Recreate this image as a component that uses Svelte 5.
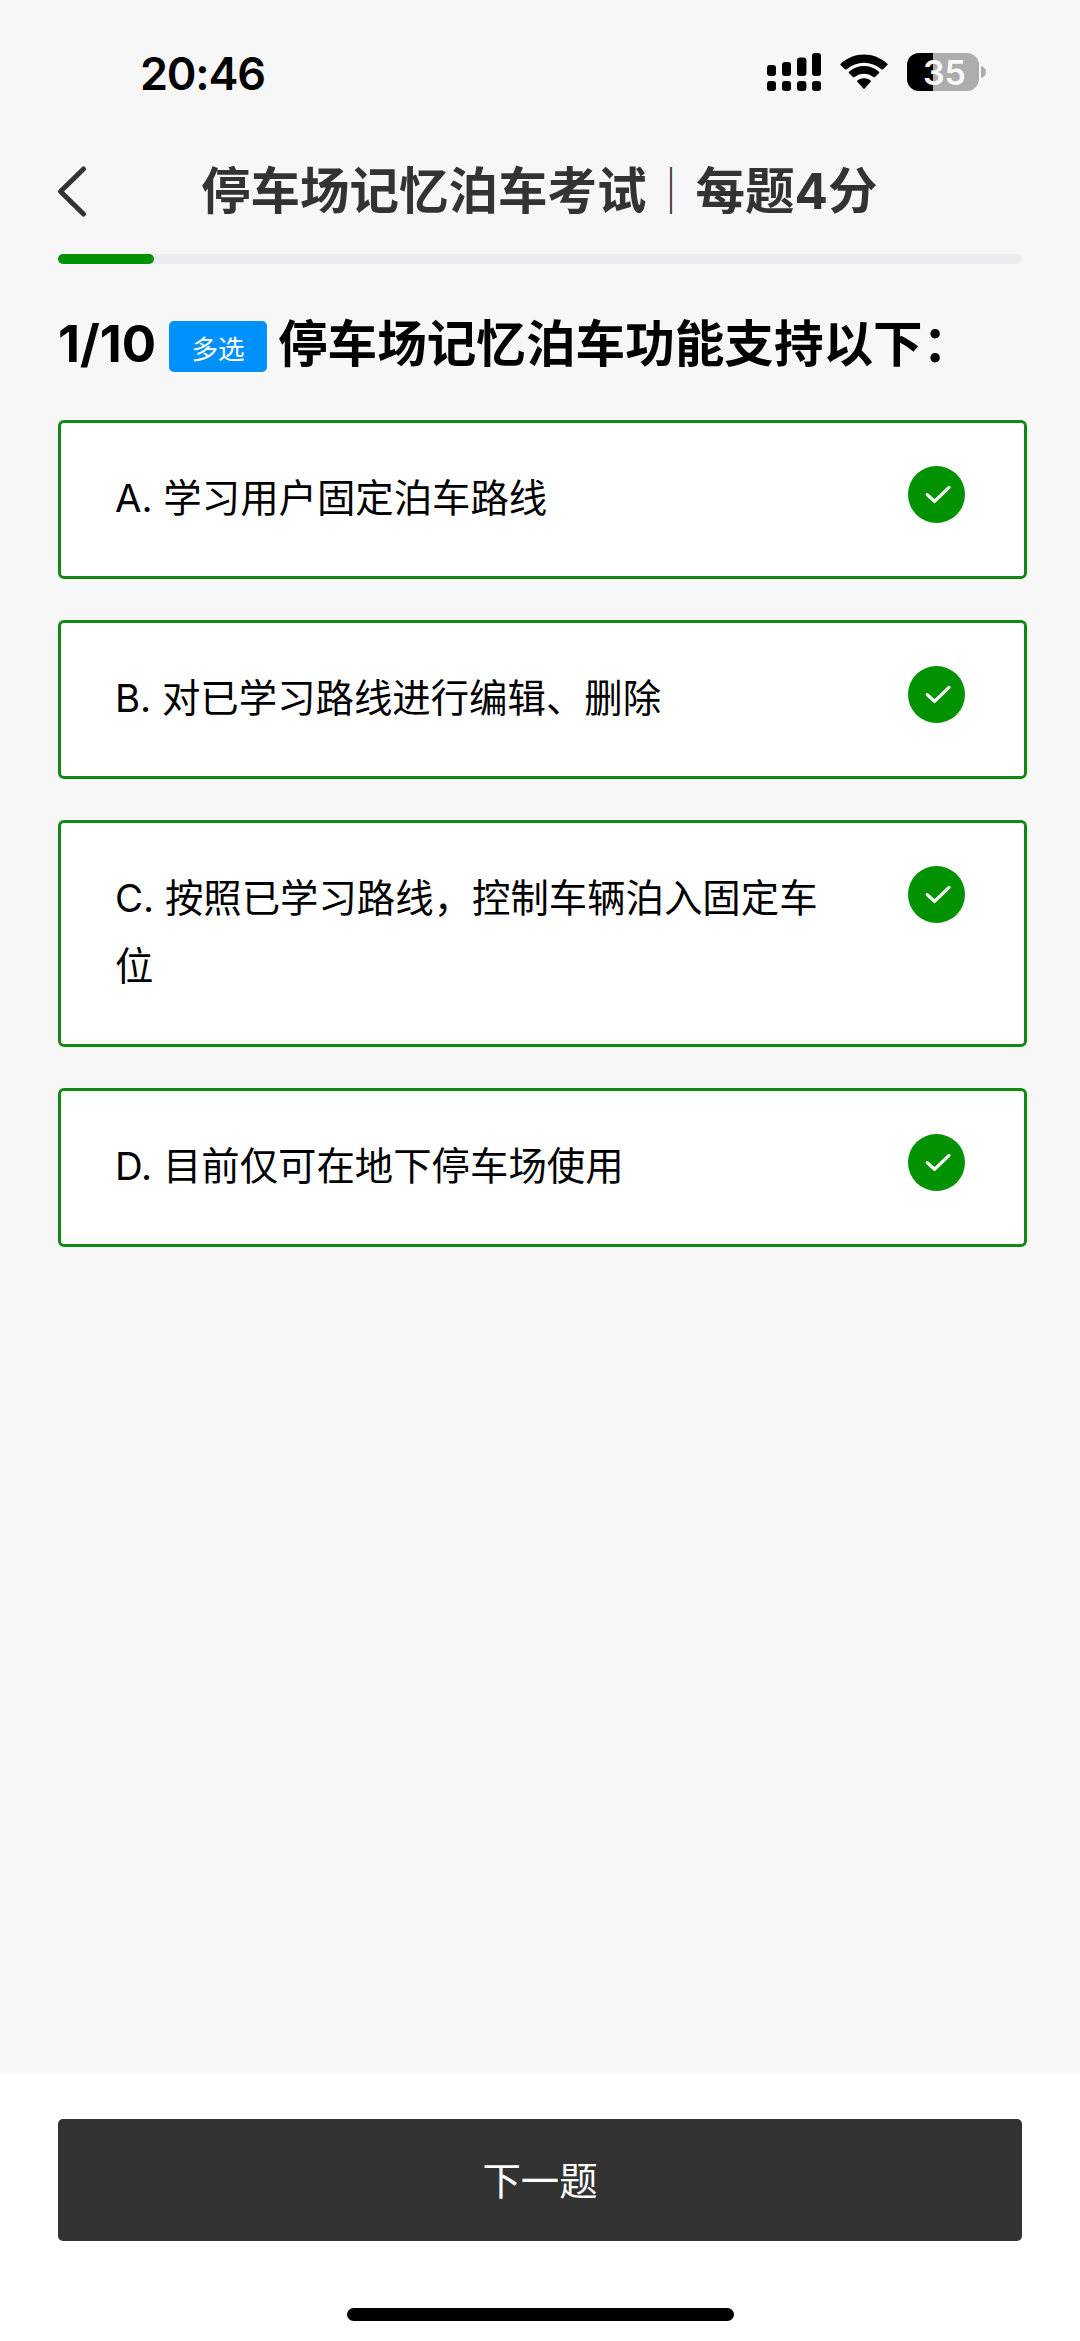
<script>
  const total = 10;
  const current = 1;
  const options = [
    { key: 'A', text: '学习用户固定泊车路线' },
    { key: 'B', text: '对已学习路线进行编辑、删除' },
    { key: 'C', text: '按照已学习路线，控制车辆泊入固定车位' },
    { key: 'D', text: '目前仅可在地下停车场使用' }
  ];
</script>

<div class="screen">
  <header class="status">
    <span class="time">20:46</span>
    <div class="indicators">
      <svg class="signal" width="54" height="38" viewBox="0 0 54 38">
        <rect x="0" y="12" width="9" height="11" rx="3" />
        <rect x="15" y="9" width="9" height="14" rx="3" />
        <rect x="30" y="4.5" width="9.4" height="18.5" rx="3" />
        <rect x="45" y="0" width="9" height="23" rx="3" />
        <rect x="0" y="28" width="9" height="10" rx="3" />
        <rect x="15" y="28" width="9" height="10" rx="3" />
        <rect x="30" y="28" width="9.4" height="10" rx="3" />
        <rect x="45" y="28" width="9" height="10" rx="3" />
      </svg>
      <svg class="wifi" width="48" height="36" viewBox="0 0 48 36">
        <path d="M0.6 11 Q0 10.3 0.7 9.7 C14 -2.7 34 -2.7 47.3 9.7 Q48 10.3 47.4 11 L43 15.2 Q42.3 15.9 41.5 15.2 C31.5 6.500 16.500 6.500 6.500 15.200 Q5.700 15.900 5 15.200 Z" />
        <path d="M8.900 19 Q8.300 18.300 9 17.700 C17.500 10.200 30.500 10.200 39 17.700 Q39.700 18.300 39.100 19 L35 23 Q34.300 23.700 33.500 23 C28 18.500 20 18.500 14.500 23 Q13.700 23.700 13 23 Z" />
        <path d="M17.300 27.800 Q16.700 27.100 17.400 26.500 C21.300 23.400 26.700 23.400 30.600 26.500 Q31.300 27.100 30.700 27.800 L24.700 34.400 Q24 35.100 23.300 34.400 Z" />
      </svg>
      <div class="battery">
        <span class="cell">35</span>
        <svg width="5" height="12" viewBox="0 0 5 12"><path d="M0 0 Q5 1.500 5 6 Q5 10.500 0 12 Z" fill="#adadad" /></svg>
      </div>
    </div>
  </header>

  <nav class="titlebar">
    <svg class="back" width="34" height="54" viewBox="0 0 34 54">
      <path d="M28.500 5 L5.500 27.500 L28.500 50" fill="none" stroke="#333" stroke-width="5" stroke-linecap="round" stroke-linejoin="round" />
    </svg>
    <h1>停车场记忆泊车考试<span class="bar">｜</span>每题4分</h1>
  </nav>

  <div class="track"><div class="fill" style="width: {(current / total) * 100}%"></div></div>

  <h2 class="question">
    <span class="count">{current}/{total}</span>
    <span class="badge">多选</span>
    <span class="prompt">停车场记忆泊车功能支持以下：</span>
  </h2>

  <main class="options">
    {#each options as option}
      <div class="option">
        <p>{option.key}. {option.text}</p>
        <svg class="tick" width="57" height="57" viewBox="0 0 57 57">
          <circle cx="28.500" cy="28.500" r="28.500" fill="#009200" />
          <path d="M19.200 28.600 L26.500 35.300 L41 21.400" fill="none" stroke="#fff" stroke-width="3.200" stroke-linecap="round" stroke-linejoin="round" />
        </svg>
      </div>
    {/each}
  </main>

  <footer>
    <button type="button">下一题</button>
    <div class="home"></div>
  </footer>
</div>

<style>
  :global(body) {
    margin: 0;
    background: #f7f7f7;
  }
  .screen {
    box-sizing: border-box;
    width: 1080px;
    height: 2341px;
    display: flex;
    flex-direction: column;
    background: #f7f7f7;
    font-family: Inter, 'Noto Sans CJK SC', sans-serif;
    color: #000;
    overflow: hidden;
  }
  .status {
    display: flex;
    justify-content: space-between;
    padding: 53px 94px 0 140px;
    height: 38px;
  }
  .time {
    font-size: 45px;
    font-weight: 600;
    line-height: 42px;
    letter-spacing: -1.200px;
  }
  .indicators {
    display: flex;
  }
  .wifi {
    margin: 1px 19px 0;
  }
  .battery {
    display: flex;
    align-items: center;
    gap: 2px;
  }
  .cell {
    width: 72px;
    height: 38px;
    box-sizing: border-box;
    padding-left: 3px;
    border-radius: 12px;
    background: linear-gradient(90deg, #000 26px, #adadad 26px);
    color: #f8f8f8;
    font-size: 34px;
    font-weight: 600;
    line-height: 40px;
    text-align: center;
  }
  .titlebar {
    display: flex;
    align-items: center;
    margin-top: 64px;
    padding-left: 55px;
    height: 72px;
  }
  h1 {
    margin: 0 0 0 112px;
    color: #333;
    font-size: 49.500px;
    font-weight: 700;
    line-height: 72px;
    white-space: nowrap;
    display: flex;
  }
  .bar {
    display: flex;
    justify-content: center;
    width: 49px;
    font-size: 47px;
    font-weight: 300;
  }
  .track {
    margin: 27px 58px 0;
    height: 10px;
    border-radius: 5px;
    background: #ebecf0;
  }
  .fill {
    height: 100%;
    border-radius: 5px;
    background: #009200;
  }
  .question {
    display: flex;
    align-items: center;
    margin: 44px 0 0 58px;
    height: 72px;
    font-size: 49.600px;
    font-weight: 700;
    line-height: 72px;
    white-space: nowrap;
  }
  .count {
    width: 111px;
    font-size: 51px;
  }
  .badge {
    width: 98px;
    height: 51px;
    margin: 5px 11px 0 0;
    border-radius: 5px;
    background: #0091ff;
    color: #fff;
    font-size: 26.600px;
    font-weight: 400;
    line-height: 57px;
    text-align: center;
  }
  .options {
    display: flex;
    flex-direction: column;
    gap: 41px;
    margin: 40px 53px 0 58px;
  }
  .option {
    display: flex;
    align-items: flex-start;
    justify-content: space-between;
    box-sizing: border-box;
    min-height: 159px;
    padding: 41px 59px 44px 54px;
    border: 3px solid #128a12;
    border-radius: 6px;
    background: #fff;
  }
  .option p {
    width: 720px;
    margin: 0;
    font-size: 38.400px;
    line-height: 68px;
  }
  .tick {
    margin-top: 2px;
  }
  footer {
    display: flex;
    flex-direction: column;
    align-items: center;
    box-sizing: border-box;
    height: 268px;
    margin-top: auto;
    padding-top: 46px;
    background: #fff;
  }
  button {
    width: 964px;
    height: 122px;
    padding: 2px 0 0;
    border: 0;
    border-radius: 5px;
    background: #333;
    color: #fff;
    font-family: inherit;
    font-size: 38.400px;
    line-height: 120px;
  }
  .home {
    width: 387px;
    height: 13px;
    margin-top: 67px;
    border-radius: 7px;
    background: #000;
  }
</style>
